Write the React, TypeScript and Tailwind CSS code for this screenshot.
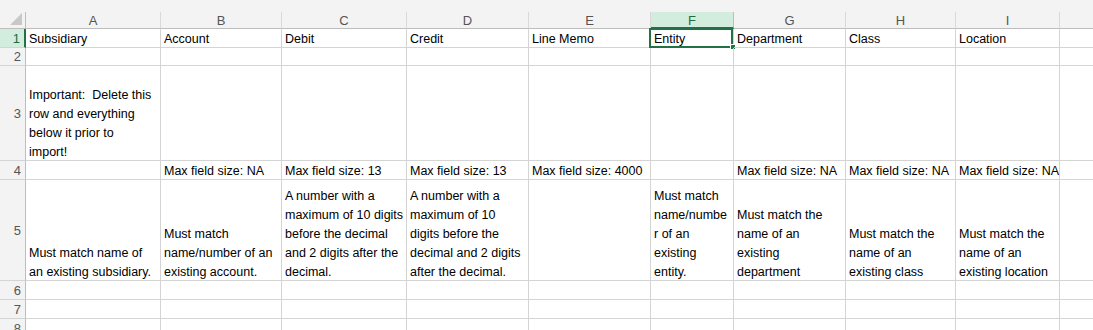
import type { JSX } from "react";

const cols = ["A", "B", "C", "D", "E", "F", "G", "H", "I", ""];
const widths = ["w-[135px]", "w-[121px]", "w-[125px]", "w-[122px]", "w-[122px]", "w-[83px]", "w-[112px]", "w-[110px]", "w-[104px]", "w-[40px]"];

type Row = { n: number; h: string; cells: string[][] };

const rows: Row[] = [
  {
    n: 1,
    h: "h-[19px]",
    cells: [["Subsidiary"], ["Account"], ["Debit"], ["Credit"], ["Line Memo"], ["Entity"], ["Department"], ["Class"], ["Location"], []],
  },
  { n: 2, h: "h-[18px]", cells: [] },
  {
    n: 3,
    h: "h-[95px]",
    cells: [["Important:  Delete this", "row and everything", "below it prior to", "import!"]],
  },
  {
    n: 4,
    h: "h-[19px]",
    cells: [
      [],
      ["Max field size: NA"],
      ["Max field size: 13"],
      ["Max field size: 13"],
      ["Max field size: 4000"],
      [],
      ["Max field size: NA"],
      ["Max field size: NA"],
      ["Max field size: NA"],
    ],
  },
  {
    n: 5,
    h: "h-[101px]",
    cells: [
      ["Must match name of", "an existing subsidiary."],
      ["Must match", "name/number of an", "existing account."],
      ["A number with a", "maximum of 10 digits", "before the decimal", "and 2 digits after the", "decimal."],
      ["A number with a", "maximum of 10", "digits before the", "decimal and 2 digits", "after the decimal."],
      [],
      ["Must match", "name/numbe", "r of an", "existing", "entity."],
      ["Must match the", "name of an", "existing", "department"],
      ["Must match the", "name of an", "existing class"],
      ["Must match the", "name of an", "existing location"],
    ],
  },
  { n: 6, h: "h-[19px]", cells: [] },
  { n: 7, h: "h-[19px]", cells: [] },
  { n: 8, h: "h-[19px]", cells: [] },
];

export default function App(): JSX.Element {
  return (
    <div className="w-[1093px] h-[330px] overflow-hidden bg-white font-['Liberation_Sans',Arial,sans-serif] text-[12.5px] text-black">
      {/* Top strip */}
      <div className="h-[12px] bg-[#f3f3f3]" />

      {/* Column headers */}
      <div className="flex h-[17px] bg-[#f3f3f3]">
        <div className="relative w-[26px] shrink-0 border-r border-b border-[#bdbdbd]">
          <svg className="absolute left-[10px] top-[1px]" width="12" height="12" viewBox="0 0 12 12">
            <polygon points="12,0 12,12 0,12" fill="#c8c8c8" />
          </svg>
        </div>
        {cols.map((c, i) => (
          <div
            key={i}
            className={`${widths[i]} shrink-0 flex items-center justify-center leading-none text-[13px] pt-[1px] ${
              c === "F"
                ? "bg-[#d2ecdd] text-[#1e6b41] border-b-2 border-b-[#217346] border-r border-r-[#bdbdbd]"
                : "text-[#555] border-r border-[#d9d9d9] border-b border-b-[#bdbdbd]"
            }`}
          >
            {c}
          </div>
        ))}
      </div>

      {/* Rows */}
      {rows.map((r) => (
        <div key={r.n} className={`flex ${r.h}`}>
          <div
            className={`w-[26px] shrink-0 flex items-center justify-end pr-[4px] pt-[1px] text-[13px] ${
              r.n === 1
                ? "bg-[#d2ecdd] text-[#1e6b41] border-r-2 border-r-[#217346] border-b border-b-[#d4d4d4]"
                : "bg-[#f3f3f3] text-[#555] border-r border-r-[#bdbdbd] border-b border-b-[#d4d4d4]"
            }`}
          >
            {r.n}
          </div>
          {cols.map((_, i) => {
            const lines = r.cells[i] ?? [];
            const selected = r.n === 1 && i === 5;
            return (
              <div
                key={i}
                className={`${widths[i]} shrink-0 relative flex flex-col justify-end pl-[3px] border-r border-b border-[#d4d4d4] leading-[19px] whitespace-pre`}
              >
                <div className="relative top-[2px]">
                  {lines.map((l, j) => (
                    <div key={j}>{l}</div>
                  ))}
                </div>
                {selected && (
                  <>
                    <div className="absolute -left-[2px] -top-[1px] right-0 -bottom-[1px] border-2 border-[#217346]" />
                    <div className="absolute -right-[3px] -bottom-[3px] w-[6px] h-[6px] bg-[#217346] border border-white" />
                  </>
                )}
              </div>
            );
          })}
        </div>
      ))}
    </div>
  );
}
